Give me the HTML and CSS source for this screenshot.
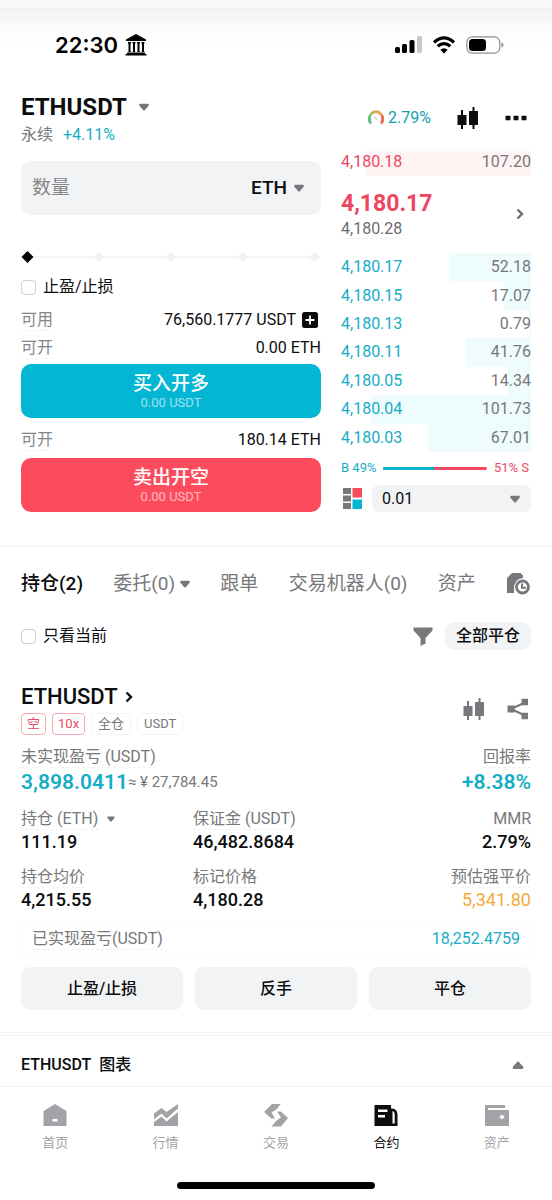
FILE: index.html
```html
<!DOCTYPE html>
<html lang="zh-CN">
<head>
<meta charset="utf-8">
<meta name="viewport" content="width=device-width, initial-scale=1">
<title>ETHUSDT 永续</title>
<link rel="stylesheet" href="styles.css">
</head>
<body>
<svg class="defs" aria-hidden="true">
  <symbol id="caret" viewBox="0 0 10 8"><path d="M1 .8h8q1 .3.8 1.8L6 7Q5 8 4 7L.2 2.600Q0 1.100 1 .8z"/></symbol>
  <symbol id="candles" viewBox="0 0 22 24"><path d="M.5 9H4V4h2v5h3.500v10H6v4H4v-4H.5zM12 5h3.500V1h2v4H21v14h-3.500v4h-2v-4H12z"/></symbol>
  <symbol id="chevron" viewBox="0 0 8 12"><path d="M1.500 1.500 6 6l-4.500 4.500" fill="none" stroke="currentColor" stroke-width="2.400"/></symbol>
</svg>
<header class="status">
  <div class="status-left">
    <span class="clock">22:30</span>
    <svg class="bank" viewBox="0 0 22 22"><path d="M11 0 1 5.500V7h20V5.500zM3 8h3v1l-.5 1v7l.5 1H3l.5-1v-7L3 9zm4.500 0h3v1l-.5 1v7l.5 1h-3l.5-1v-7l-.5-1zm4.500 0h3v1l-.5 1v7l.5 1h-3l.5-1v-7L12 9zm4.500 0h3v1l-.5 1v7l.5 1h-3l.5-1v-7l-.5-1zM2 18.500h18V20H2zM.5 20h21v1.500H.5z"/></svg>
  </div>
  <div class="status-right">
    <svg width="27" height="18" viewBox="0 0 27 18"><rect x="0" y="11" width="5" height="6" rx="1.500"/><rect x="7" y="8" width="5" height="9" rx="1.500"/><rect x="14.500" y="4" width="5" height="13" rx="1.500"/><rect x="22" y="0" width="5" height="17" rx="1.500" fill="#c8c8c8"/></svg>
    <svg width="24" height="18" viewBox="0 0 24 18"><path d="M2 6.500Q12-2.700 22 6.500M5.700 10.300q6.300-5.400 12.600 0" fill="none" stroke="#000" stroke-width="3.200"/><path d="M12 17.500 8.300 13.800q3.700-3 7.400 0z"/></svg>
    <svg width="38" height="18" viewBox="0 0 38 18"><rect x=".8" y=".8" width="33" height="16.400" rx="5.500" fill="none" stroke="#8e8e8e" stroke-width="1.200"/><rect x="3" y="3" width="17" height="12" rx="3.500"/><path d="M35.500 6.500q2 .7 2 2.500t-2 2.500z" fill="#8e8e8e"/></svg>
  </div>
</header>
<main>
  <section class="head">
    <div>
      <h1><button class="plain pair">ETHUSDT <svg class="caret wide"><use href="#caret"/></svg></button></h1>
      <p class="sub"><span>永续</span><span class="up">+4.11%</span></p>
    </div>
    <div class="head-tools">
      <span class="risk"><svg width="16" height="16" viewBox="0 0 16 16" fill="none" stroke-width="2.800"><path d="M3 13.500A6.500 6.500 0 0 1 2.500 5" stroke="#67c08b"/><path d="M2.500 5A6.500 6.500 0 0 1 8 1.600" stroke="#b5bd62"/><path d="M8 1.600A6.500 6.500 0 0 1 13.500 5" stroke="#f2a04e"/><path d="M13.500 5A6.500 6.500 0 0 1 13 13.500" stroke="#ee6d55"/><path d="m6 7 3 2.500" stroke="#c6d4cc" stroke-width="1.500"/></svg>2.79%</span>
      <button class="plain" aria-label="K线"><svg width="22" height="24"><use href="#candles"/></svg></button>
      <button class="plain" aria-label="更多"><svg width="22" height="6" viewBox="0 0 22 6"><path d="M.5.8h5v4.500h-5zm8 0h5v4.500h-5zm8 0h5v4.500h-5z"/></svg></button>
    </div>
  </section>

  <section class="trade">
    <form class="order">
      <div class="amount">
        <input type="text" placeholder="数量" aria-label="数量">
        <button type="button" class="plain unit">ETH <svg class="caret"><use href="#caret"/></svg></button>
      </div>
      <div class="slider">
        <div class="marks"><i></i><i></i><i></i><i></i><i></i></div>
        <input type="range" min="0" max="100" value="0" aria-label="仓位比例">
      </div>
      <label class="check"><input type="checkbox"><span>止盈/止损</span></label>
      <div class="line first"><span class="hint">可用</span><span class="fund">76,560.1777 USDT <button type="button" class="plain plus" aria-label="划转"><svg width="16" height="16" viewBox="0 0 16 16"><rect width="16" height="16" rx="2.500"/><path d="M8 3.500v9M3.500 8h9" stroke="#fff" stroke-width="1.800"/></svg></button></span></div>
      <div class="line"><span class="hint">可开</span><span>0.00 ETH</span></div>
      <button type="button" class="act buy"><b>买入开多</b><small>0.00 USDT</small></button>
      <div class="line second"><span class="hint">可开</span><span>180.14 ETH</span></div>
      <button type="button" class="act sell"><b>卖出开空</b><small>0.00 USDT</small></button>
    </form>

    <div class="market">
      <div class="level ask"><i class="depth" style="width:87%"></i><span>4,180.18</span><span>107.20</span></div>
      <div class="last">
        <div><p class="price">4,180.17</p><p class="mark"><span class="hint">4,180.28</span></p></div>
        <button class="plain" aria-label="盘口"><svg class="chev"><use href="#chevron"/></svg></button>
      </div>
      <div class="book">
        <div class="level bid"><i class="depth" style="width:43%"></i><span>4,180.17</span><span>52.18</span></div>
        <div class="level bid"><i class="depth" style="width:14%"></i><span>4,180.15</span><span>17.07</span></div>
        <div class="level bid"><i class="depth" style="width:1%"></i><span>4,180.13</span><span>0.79</span></div>
        <div class="level bid"><i class="depth" style="width:34%"></i><span>4,180.11</span><span>41.76</span></div>
        <div class="level bid"><i class="depth" style="width:12%"></i><span>4,180.05</span><span>14.34</span></div>
        <div class="level bid"><i class="depth" style="width:84%"></i><span>4,180.04</span><span>101.73</span></div>
        <div class="level bid"><i class="depth" style="width:54%"></i><span>4,180.03</span><span>67.01</span></div>
      </div>
      <div class="ratio"><span class="up">B 49%</span><span class="bar"><i style="width:49%"></i></span><span class="down">51% S</span></div>
      <div class="step">
        <button class="plain" aria-label="盘口样式"><svg width="19" height="21" viewBox="0 0 19 21"><path d="M0 0h8v6H0zm0 7.500h8v6H0zM0 15h8v6H0z" fill="#77787b"/><path d="M9.500 0H19v9.500H9.500z" fill="#fa4a5e"/><path d="M9.500 11.500H19V21H9.500z" fill="#02b6d4"/></svg></button>
        <div class="pick"><select aria-label="价格精度"><option>0.01</option></select><svg class="caret"><use href="#caret"/></svg></div>
      </div>
    </div>
  </section>

  <nav class="tabs">
    <a href="#positions" class="on">持仓(2)</a>
    <a href="#orders" class="pair">委托(0) <svg class="caret"><use href="#caret"/></svg></a>
    <a href="#copy">跟单</a>
    <a href="#bots">交易机器人(0)</a>
    <a href="#assets">资产</a>
    <a href="#history" class="pair" aria-label="历史"><svg width="25" height="22" viewBox="0 0 25 22"><path d="M6 0h8.500L17 2.500V5Q8 6 8 16v4H1V5z"/><circle cx="16.500" cy="14" r="6" fill="none" stroke="currentColor" stroke-width="2.800"/><path d="M16 10.500v4.300h4" fill="none" stroke="currentColor" stroke-width="2"/></svg></a>
  </nav>

  <div class="filter">
    <label class="check"><input type="checkbox"><span>只看当前</span></label>
    <div class="filter-right">
      <button class="plain" aria-label="筛选"><svg width="20" height="19" viewBox="0 0 20 19"><path d="M.5.500h19v3L12.500 11v5.500L7.500 19v-8L.5 3.500z"/></svg></button>
      <button class="soft close-all">全部平仓</button>
    </div>
  </div>

  <article class="position" id="positions">
    <div class="pos-head">
      <div>
        <h2><a href="#detail" class="pair">ETHUSDT <svg class="chev"><use href="#chevron"/></svg></a></h2>
        <div class="tags"><span class="tag hot">空</span><span class="tag hot">10x</span><span class="tag">全仓</span><span class="tag">USDT</span></div>
      </div>
      <div class="pos-tools">
        <button class="plain" aria-label="K线"><svg width="22" height="24"><use href="#candles"/></svg></button>
        <button class="plain" aria-label="分享"><svg width="22" height="22" viewBox="0 0 22 22"><path d="M4 11 18 4.500M4 11l14 6.500" stroke="currentColor" stroke-width="2"/><path d="M.5 7.500h7v7h-7zM14.500.800H21v6.500h-6.500zm0 14H21v6.500h-6.500z"/></svg></button>
      </div>
    </div>
    <div class="pnl">
      <div><p class="label"><span class="hint">未实现盈亏 (USDT)</span></p><p class="big up pair">3,898.0411<span class="approx">≈ ¥ 27,784.45</span></p></div>
      <div class="end"><p class="label"><span class="hint">回报率</span></p><p class="big up">+8.38%</p></div>
    </div>
    <div class="stats">
      <div><p class="label"><span class="hint">持仓 (ETH)</span><svg class="caret small"><use href="#caret"/></svg></p><p class="value">111.19</p></div>
      <div><p class="label"><span class="hint">保证金 (USDT)</span></p><p class="value">46,482.8684</p></div>
      <div class="end"><p class="label"><span class="hint">MMR</span></p><p class="value">2.79%</p></div>
      <div><p class="label"><span class="hint">持仓均价</span></p><p class="value">4,215.55</p></div>
      <div><p class="label"><span class="hint">标记价格</span></p><p class="value">4,180.28</p></div>
      <div class="end"><p class="label"><span class="hint">预估强平价</span></p><p class="value warn">5,341.80</p></div>
    </div>
    <div class="realized"><span class="hint">已实现盈亏(USDT)</span><span class="up">18,252.4759</span></div>
    <div class="actions"><button class="soft">止盈/止损</button><button class="soft">反手</button><button class="soft">平仓</button></div>
  </article>

  <button class="plain chart"><span>ETHUSDT&nbsp; 图表</span><svg class="caret flip"><use href="#caret"/></svg></button>
</main>

<nav class="dock">
  <a href="#home"><svg viewBox="0 0 24 24"><path fill-rule="evenodd" d="M12 1 23.500 8v15H.5V8zM9.500 16v2.500h5V16z"/></svg>首页</a>
  <a href="#quotes"><svg viewBox="0 0 24 24"><path d="M0 10.500 7.500 5l5 4L24 1v4.500l-11.500 10-5-5L0 16.500z"/><path d="m0 19 7.500-5.500 5 5L24 9v14H0z"/></svg>行情</a>
  <a href="#trade"><svg viewBox="0 0 24 24"><path d="M16.500 1H8L0 9l7.500 6.500H11L7.500 9.500 13 6zM7.500 23.500H17L24 15l-7-6.500h-4l4 6-5 3.500z"/></svg>交易</a>
  <a href="#futures" class="on"><svg viewBox="0 0 24 24"><path fill-rule="evenodd" d="M.5 2H17v3.500q6.500-.5 6.500 6.500v11H.5zM4 6.500V9h9.500V6.500zM4 12v2.500h7V12zm14.500-4v12.500h2.200V12q0-3.500-2.200-4z"/></svg>合约</a>
  <a href="#wallet"><svg viewBox="0 0 24 24"><path fill-rule="evenodd" d="M0 2h20v3H3v2h21v16H0zM17 11.500l-2.700 2.500 2.700 2.500 2.700-2.500z"/></svg>资产</a>
</nav>
<div class="home-bar"></div>
</body>
</html>
```

FILE: styles.css
```css
* { box-sizing: border-box; }

body {
  margin: 0;
  background: #fff;
  color: #0c0d0f;
  font: 16px/20px Roboto, "Noto Sans CJK SC", sans-serif;
}

p, h1, h2 { margin: 0; }
a { color: inherit; text-decoration: none; }
svg { display: block; flex: none; fill: currentColor; }
.defs { position: absolute; width: 0; height: 0; }

button, input, select { font: inherit; color: inherit; }
button { cursor: pointer; }

.plain { border: 0; padding: 0; background: none; }
.pair { display: inline-flex; align-items: center; }
.up { color: #16adc6; }
.down { color: #e94a64; }
.end { text-align: right; }
.hint { border-bottom: 1px dashed #f0f0f0; }

.caret { width: 10px; height: 8px; color: #77787b; }
.caret.wide { margin-left: 12px; }
.caret.small { width: 8px; height: 6px; margin-left: 9px; }
.caret.flip { width: 12px; height: 9px; transform: rotate(180deg); }
.chev { width: 8px; height: 12px; }

/* Status bar */
.status {
  display: flex;
  justify-content: space-between;
  align-items: center;
  height: 90px;
  padding: 0 48px 0 55px;
  color: #000;
  background: linear-gradient(#f9f9f9 0, #f8f8f8 7px, #f1f1f1 9px, #f5f5f5 15px, #fbfbfb 28px, #fff 45px);
}
.status-left { display: flex; align-items: center; gap: 7px; }
.status-right { display: flex; align-items: center; gap: 10px; }
.clock { font: 600 22px/26px Inter, sans-serif; }
.bank { width: 22px; height: 22px; }

/* Pair heading */
.head { display: flex; justify-content: space-between; align-items: center; padding: 0 25px 0 21px; }
.head h1 { font-size: 24px; line-height: 34px; height: 34px; }
.head h1 button { font-weight: 700; }
.sub { display: flex; gap: 10px; padding-top: 1px; padding-bottom: 1px; color: #77787b; }
.head-tools { display: flex; align-items: center; gap: 26px; }
.risk { display: flex; align-items: center; gap: 4px; color: #119fae; }

/* Order form and order book */
.trade { display: grid; grid-template-columns: 30fr 19fr; column-gap: 20px; padding: 0 21px; }
.order, .market { display: flex; flex-direction: column; min-width: 0; }
.amount {
  display: flex;
  align-items: center;
  height: 54px;
  margin-top: 15px;
  padding: 0 17px 0 11px;
  border-radius: 10px;
  background: #f2f3f5;
  font-size: 19px;
}
.amount input { flex: 1; min-width: 0; padding: 0; border: 0; outline: 0; background: none; }
.amount input::placeholder { color: #85868a; opacity: 1; }
.unit { display: flex; align-items: center; gap: 7px; font-weight: 500; }

.slider { position: relative; margin-top: 32px; height: 20px; padding: 0 1px; }
.marks {
  display: flex;
  justify-content: space-between;
  align-items: center;
  height: 20px;
  background: linear-gradient(#f6f6f6, #f6f6f6) center / 100% 2px no-repeat;
}
.marks i { width: 11px; height: 11px; background: #f2f2f2; clip-path: polygon(50% 0, 100% 50%, 50% 100%, 0 50%); }
.slider input {
  position: absolute;
  inset: 0;
  width: 100%;
  height: 20px;
  margin: 0;
  background: none;
  appearance: none;
}
.slider input::-webkit-slider-thumb {
  appearance: none;
  width: 13px;
  height: 13px;
  background: #000;
  clip-path: polygon(50% 4%, 96% 50%, 50% 96%, 4% 50%);
}

.check { display: inline-flex; align-items: center; gap: 7px; }
.check input {
  appearance: none;
  width: 15px;
  height: 15px;
  margin: 0;
  border: 1px solid #cfcfcf;
  border-radius: 4px;
}
.check input:checked { background: #0c0d0f; }
.order .check { height: 24px; margin-top: 8px; }

.line { display: flex; justify-content: space-between; align-items: center; height: 28px; }
.line .hint { color: #85868a; }
.line.first { margin-top: 7px; }
.line.second { margin-top: 8px; }
.fund { display: flex; align-items: center; gap: 6px; padding-right: 3px; }

.act {
  display: flex;
  flex-direction: column;
  align-items: center;
  justify-content: center;
  height: 54px;
  border: 0;
  padding: 2px 0 0;
  border-radius: 10px;
  color: #fff;
}
.act b { font-size: 19px; line-height: 22px; font-weight: 500; }
.act small { font-size: 13px; line-height: 16px; opacity: .6; }
.buy { margin-top: 2px; background: #02b6d4; }
.sell { margin-top: 4px; background: #fd4b5e; }

.level { position: relative; display: flex; justify-content: space-between; align-items: center; min-height: 28px; color: #77787b; }
.level span { position: relative; }
.depth { position: absolute; top: 0; right: 0; bottom: 0; }
.ask { margin-top: 2px; }
.ask .depth { background: linear-gradient(#fff, #fff3f4 5px); }
.bid .depth { background: #effcfd; }
.ask span:nth-child(2) { color: #e94a64; }
.bid span:nth-child(2) { color: #16adc6; }
.last { display: flex; justify-content: space-between; align-items: center; margin: 13px 0 14px; padding-right: 7px; color: #6b6c6f; }
.price { font-size: 23px; line-height: 30px; font-weight: 700; color: #ef4560; }
.book { display: grid; grid-auto-rows: 1fr; flex: 1; }
.ratio { display: flex; align-items: center; gap: 7px; margin: 7px 2px 8px 0; font-size: 13px; line-height: 18px; }
.bar { flex: 1; height: 3px; border-radius: 2px; background: #f04a60; overflow: hidden; }
.bar i { display: block; height: 3px; background: #02b6d4; }
.step { display: flex; align-items: center; gap: 10px; padding-left: 2px; }
.pick { position: relative; flex: 1; }
.pick select { width: 100%; height: 27px; padding: 0 10px; border: 0; border-radius: 7px; background: #f2f3f5; appearance: none; }
.pick .caret { position: absolute; right: 11px; top: 10px; pointer-events: none; }

/* Tabs */
.tabs {
  display: flex;
  justify-content: space-between;
  align-items: center;
  margin-top: 33px;
  padding: 25px 21px 21px;
  border-top: 2px solid #f7f7f7;
  color: #77787b;
  font-size: 19px;
  line-height: 24px;
}
.tabs .on { color: #0c0d0f; font-weight: 500; }
.tabs .caret { margin-left: 5px; }

.soft { border: 0; padding: 0; border-radius: 9px; background: #f2f3f5; font-weight: 500; }
.filter { display: flex; justify-content: space-between; align-items: center; padding: 5px 21px 0; }
.filter .check { line-height: 28px; }
.filter-right { display: flex; align-items: center; gap: 12px; color: #77787b; }
.close-all { height: 28px; padding: 0 11px; color: #0c0d0f; }

/* Position card */
.position { padding: 33px 21px 22px; border-bottom: 4px double #f2f2f2; }
.pos-head { display: flex; justify-content: space-between; align-items: center; }
.pos-head h2 { font-size: 22px; line-height: 28px; font-weight: 500; }
.pos-head h2 a { display: flex; gap: 7px; }
.pos-tools { display: flex; align-items: center; gap: 22px; padding: 0 2px 0 0; color: #77787b; }
.tags { display: flex; gap: 6px; margin-top: 2px; }
.tag { padding: 0 6px; border: 1px solid #f4f4f4; border-radius: 4px; color: #77787b; font-size: 13px; line-height: 20px; }
.tag.hot { padding: 0 5px; border-color: #f8a9b4; color: #e94a64; }

.pnl { display: flex; justify-content: space-between; margin-top: 10px; }
.label { display: flex; height: 24px; align-items: center; color: #77787b; }
.end .label { justify-content: flex-end; }
.big { font-size: 21px; line-height: 26px; font-weight: 600; }
.approx { font-size: 15px; font-weight: 400; color: #77787b; }
.stats { display: grid; grid-template-columns: 1fr 1fr 1fr; gap: 12px 6px; margin-top: 12px; }
.value { font-size: 18px; line-height: 22px; font-weight: 500; }
.value.warn { font-weight: 400; color: #f5a940; }
.realized {
  display: flex;
  justify-content: space-between;
  align-items: center;
  height: 36px;
  margin-top: 10px;
  padding: 0 10px;
  border: 1px solid #fbfbfb;
  border-radius: 6px;
  color: #77787b;
}
.actions { display: grid; grid-template-columns: repeat(3, 1fr); gap: 12px; margin-top: 10px; }
.actions .soft { height: 43px; }

.chart { display: flex; justify-content: space-between; align-items: center; width: 100%; padding: 19px 28px 11px 21px; font-weight: 500; }

/* Bottom navigation */
.dock { display: grid; grid-template-columns: repeat(5, 1fr); border-top: 1px solid #f0f0f0; padding: 16px 0 0; }
.dock a { display: flex; flex-direction: column; align-items: center; gap: 7px; color: #a1a3a7; font-size: 13px; line-height: 18px; }
.dock svg { width: 24px; height: 24px; }
.dock .on { color: #0c0d0f; }
.home-bar { width: 36%; height: 7px; margin: 30px auto 0; border-radius: 4px; background: #000; }
```
